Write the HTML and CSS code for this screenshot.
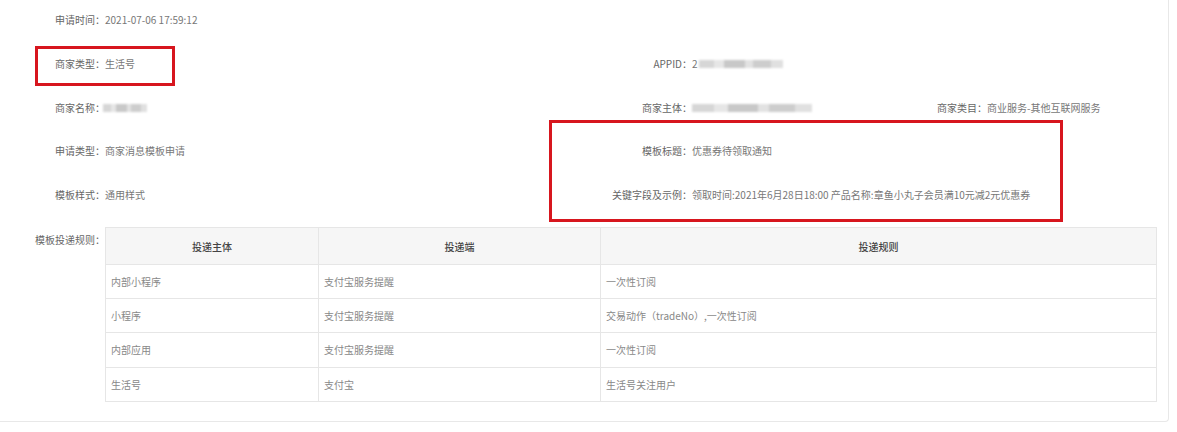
FILE: index.html
```html
<!DOCTYPE html>
<html lang="zh-CN">
<head>
  <meta charset="UTF-8">
  <meta name="viewport" content="width=device-width, initial-scale=1.0">
  <title>模板申请详情</title>
  <link rel="stylesheet" href="styles.css">
</head>
<body>
  <div class="card">
    <!-- 基本信息 -->
    <div class="info">
      <span class="label">申请时间：</span>
      <span class="value">2021-07-06 17:59:12</span>
      <span class="empty"></span><span class="empty"></span><span class="empty"></span><span class="empty"></span>

      <span class="label">商家类型：</span>
      <span class="value">生活号</span>
      <span class="label">APPID：</span>
      <span class="value">2<i class="mask mask-appid"></i></span>
      <span class="empty"></span><span class="empty"></span>

      <span class="label">商家名称：</span>
      <span class="value"><i class="mask mask-name"></i></span>
      <span class="label">商家主体：</span>
      <span class="value"><i class="mask mask-owner"></i></span>
      <span class="label">商家类目：</span>
      <span class="value">商业服务-其他互联网服务</span>

      <span class="label">申请类型：</span>
      <span class="value">商家消息模板申请</span>
      <span class="label">模板标题：</span>
      <span class="value">优惠券待领取通知</span>
      <span class="empty"></span><span class="empty"></span>

      <span class="label">模板样式：</span>
      <span class="value">通用样式</span>
      <span class="label">关键字段及示例：</span>
      <span class="value wide">领取时间:2021年6月28日18:00 产品名称:章鱼小丸子会员满10元减2元优惠券</span>
    </div>

    <!-- 投递规则 -->
    <div class="rules">
      <span class="label rules-label">模板投递规则：</span>
      <table class="rule-table">
        <colgroup>
          <col class="c1">
          <col class="c2">
          <col>
        </colgroup>
        <thead>
          <tr><th>投递主体</th><th>投递端</th><th>投递规则</th></tr>
        </thead>
        <tbody>
          <tr><td>内部小程序</td><td>支付宝服务提醒</td><td>一次性订阅</td></tr>
          <tr><td>小程序</td><td>支付宝服务提醒</td><td>交易动作（tradeNo）,一次性订阅</td></tr>
          <tr><td>内部应用</td><td>支付宝服务提醒</td><td>一次性订阅</td></tr>
          <tr><td>生活号</td><td>支付宝</td><td>生活号关注用户</td></tr>
        </tbody>
      </table>
    </div>

    <!-- 标注框 -->
    <div class="mark mark-type"></div>
    <div class="mark mark-template"></div>
  </div>
</body>
</html>
```

FILE: styles.css
```css
body {
  margin: 0;
  padding: 0;
  background: #fff;
  font-family: "Noto Sans CJK SC", "Noto Sans", sans-serif;
  font-size: 10px;
  color: #777;
}

.card {
  position: relative;
  width: 1168px;
  height: 421px;
  border-right: 1px solid #e8e8e8;
  border-bottom: 1px solid #e8e8e8;
  border-bottom-right-radius: 4px;
}

.info {
  display: grid;
  grid-template-columns: 105px 485px 102px 195px 100px 1fr;
  grid-auto-rows: 20px;
  row-gap: 23.75px;
  padding-top: 10px;
  line-height: 20px;
  align-items: center;
}

.label {
  text-align: right;
  color: #666;
  white-space: nowrap;
}

.value {
  white-space: nowrap;
  display: flex;
  align-items: center;
  color: #777;
}

.value.wide {
  grid-column: 4 / 7;
}

.mask {
  display: inline-block;
  height: 8px;
  filter: blur(1.2px);
  background: linear-gradient(90deg, #d6d6d6 0 18%, #e6e6e6 18% 30%, #c8c8c8 30% 55%, #e2e2e2 55% 64%, #cdcdcd 64% 86%, #e0e0e0 86%);
}

.mask-appid {
  width: 84px;
  margin-left: 1px;
}

.mask-name {
  width: 44px;
  margin-left: -2px;
}

.mask-owner {
  width: 120px;
}

.rules {
  display: flex;
  margin-top: 22px;
}

.rules-label {
  width: 105px;
  flex: none;
  line-height: 20px;
  padding-top: 3px;
}

.rule-table {
  width: 1052px;
  border-collapse: collapse;
  table-layout: fixed;
  border: 1px solid #e6e6e6;
}

.rule-table .c1 {
  width: 213px;
}

.rule-table .c2 {
  width: 282px;
}

.rule-table th {
  height: 34px;
  background: #f6f6f6;
  color: #444;
  font-weight: 500;
  text-align: center;
  border-bottom: 1px solid #e6e6e6;
  border-right: 1px solid #e6e6e6;
}

.rule-table td {
  height: 33.2px;
  padding: 0 5px;
  color: #888;
  border-bottom: 1px solid #e6e6e6;
  border-right: 1px solid #e6e6e6;
}

.mark {
  position: absolute;
  border: 3px solid #d7161e;
  box-sizing: border-box;
}

.mark-type {
  left: 35px;
  top: 46px;
  width: 140px;
  height: 40px;
}

.mark-template {
  left: 549px;
  top: 120px;
  width: 514px;
  height: 102px;
}
```
